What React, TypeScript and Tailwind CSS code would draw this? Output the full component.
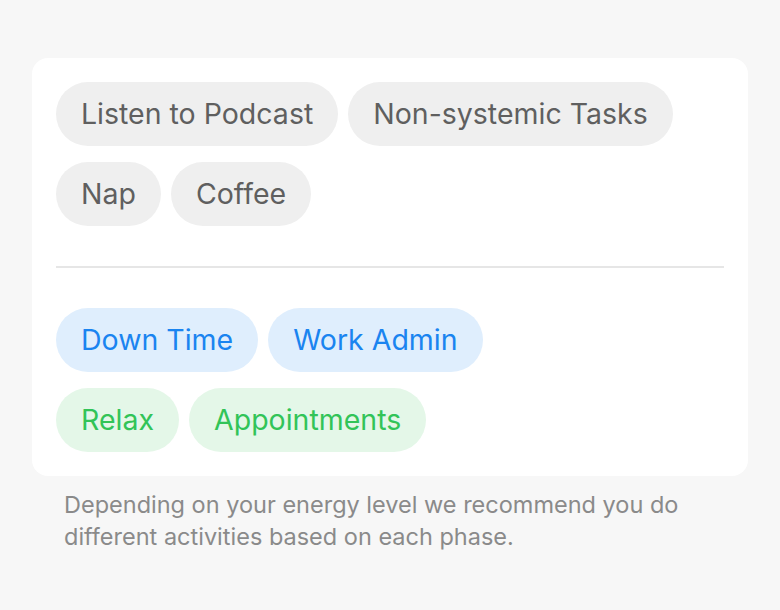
import React from 'react';

type Tone = 'gray' | 'blue' | 'green';

const toneClass: Record<Tone, string> = {
  gray: 'bg-[#efefef] text-[#5f5f5f]',
  blue: 'bg-[#dfeefd] text-[#1a84f0]',
  green: 'bg-[#e4f7e8] text-[#32c458]',
};

const Chip: React.FC<{ label: string; tone: Tone }> = ({ label, tone }) => (
  <span className={`h-16 px-[25px] rounded-full flex items-center text-[28.5px] ${toneClass[tone]}`}>
    {label}
  </span>
);

const App: React.FC = () => {
  const activities = ['Listen to Podcast', 'Non-systemic Tasks', 'Nap', 'Coffee'];

  return (
    <div
      className="min-h-screen w-full bg-[#f7f7f7] px-8 pt-[58px]"
      style={{ fontFamily: 'Inter, "Noto Sans", sans-serif' }}
    >
      <div className="bg-white rounded-2xl p-6">
        <div className="flex flex-wrap gap-x-[10px] gap-y-4">
          {activities.map((a) => (
            <Chip key={a} label={a} tone="gray" />
          ))}
        </div>
        <div className="h-[2px] bg-[#e6e6e6] my-10" />
        <div className="flex flex-col gap-4">
          <div className="flex gap-[10px]">
            <Chip label="Down Time" tone="blue" />
            <Chip label="Work Admin" tone="blue" />
          </div>
          <div className="flex gap-[10px]">
            <Chip label="Relax" tone="green" />
            <Chip label="Appointments" tone="green" />
          </div>
        </div>
      </div>
      <p className="px-8 pt-[13px] text-[23.5px] leading-8 text-[#8a8a8a]">
        Depending on your energy level we recommend you do different activities based on each phase.
      </p>
    </div>
  );
};

export default App;
